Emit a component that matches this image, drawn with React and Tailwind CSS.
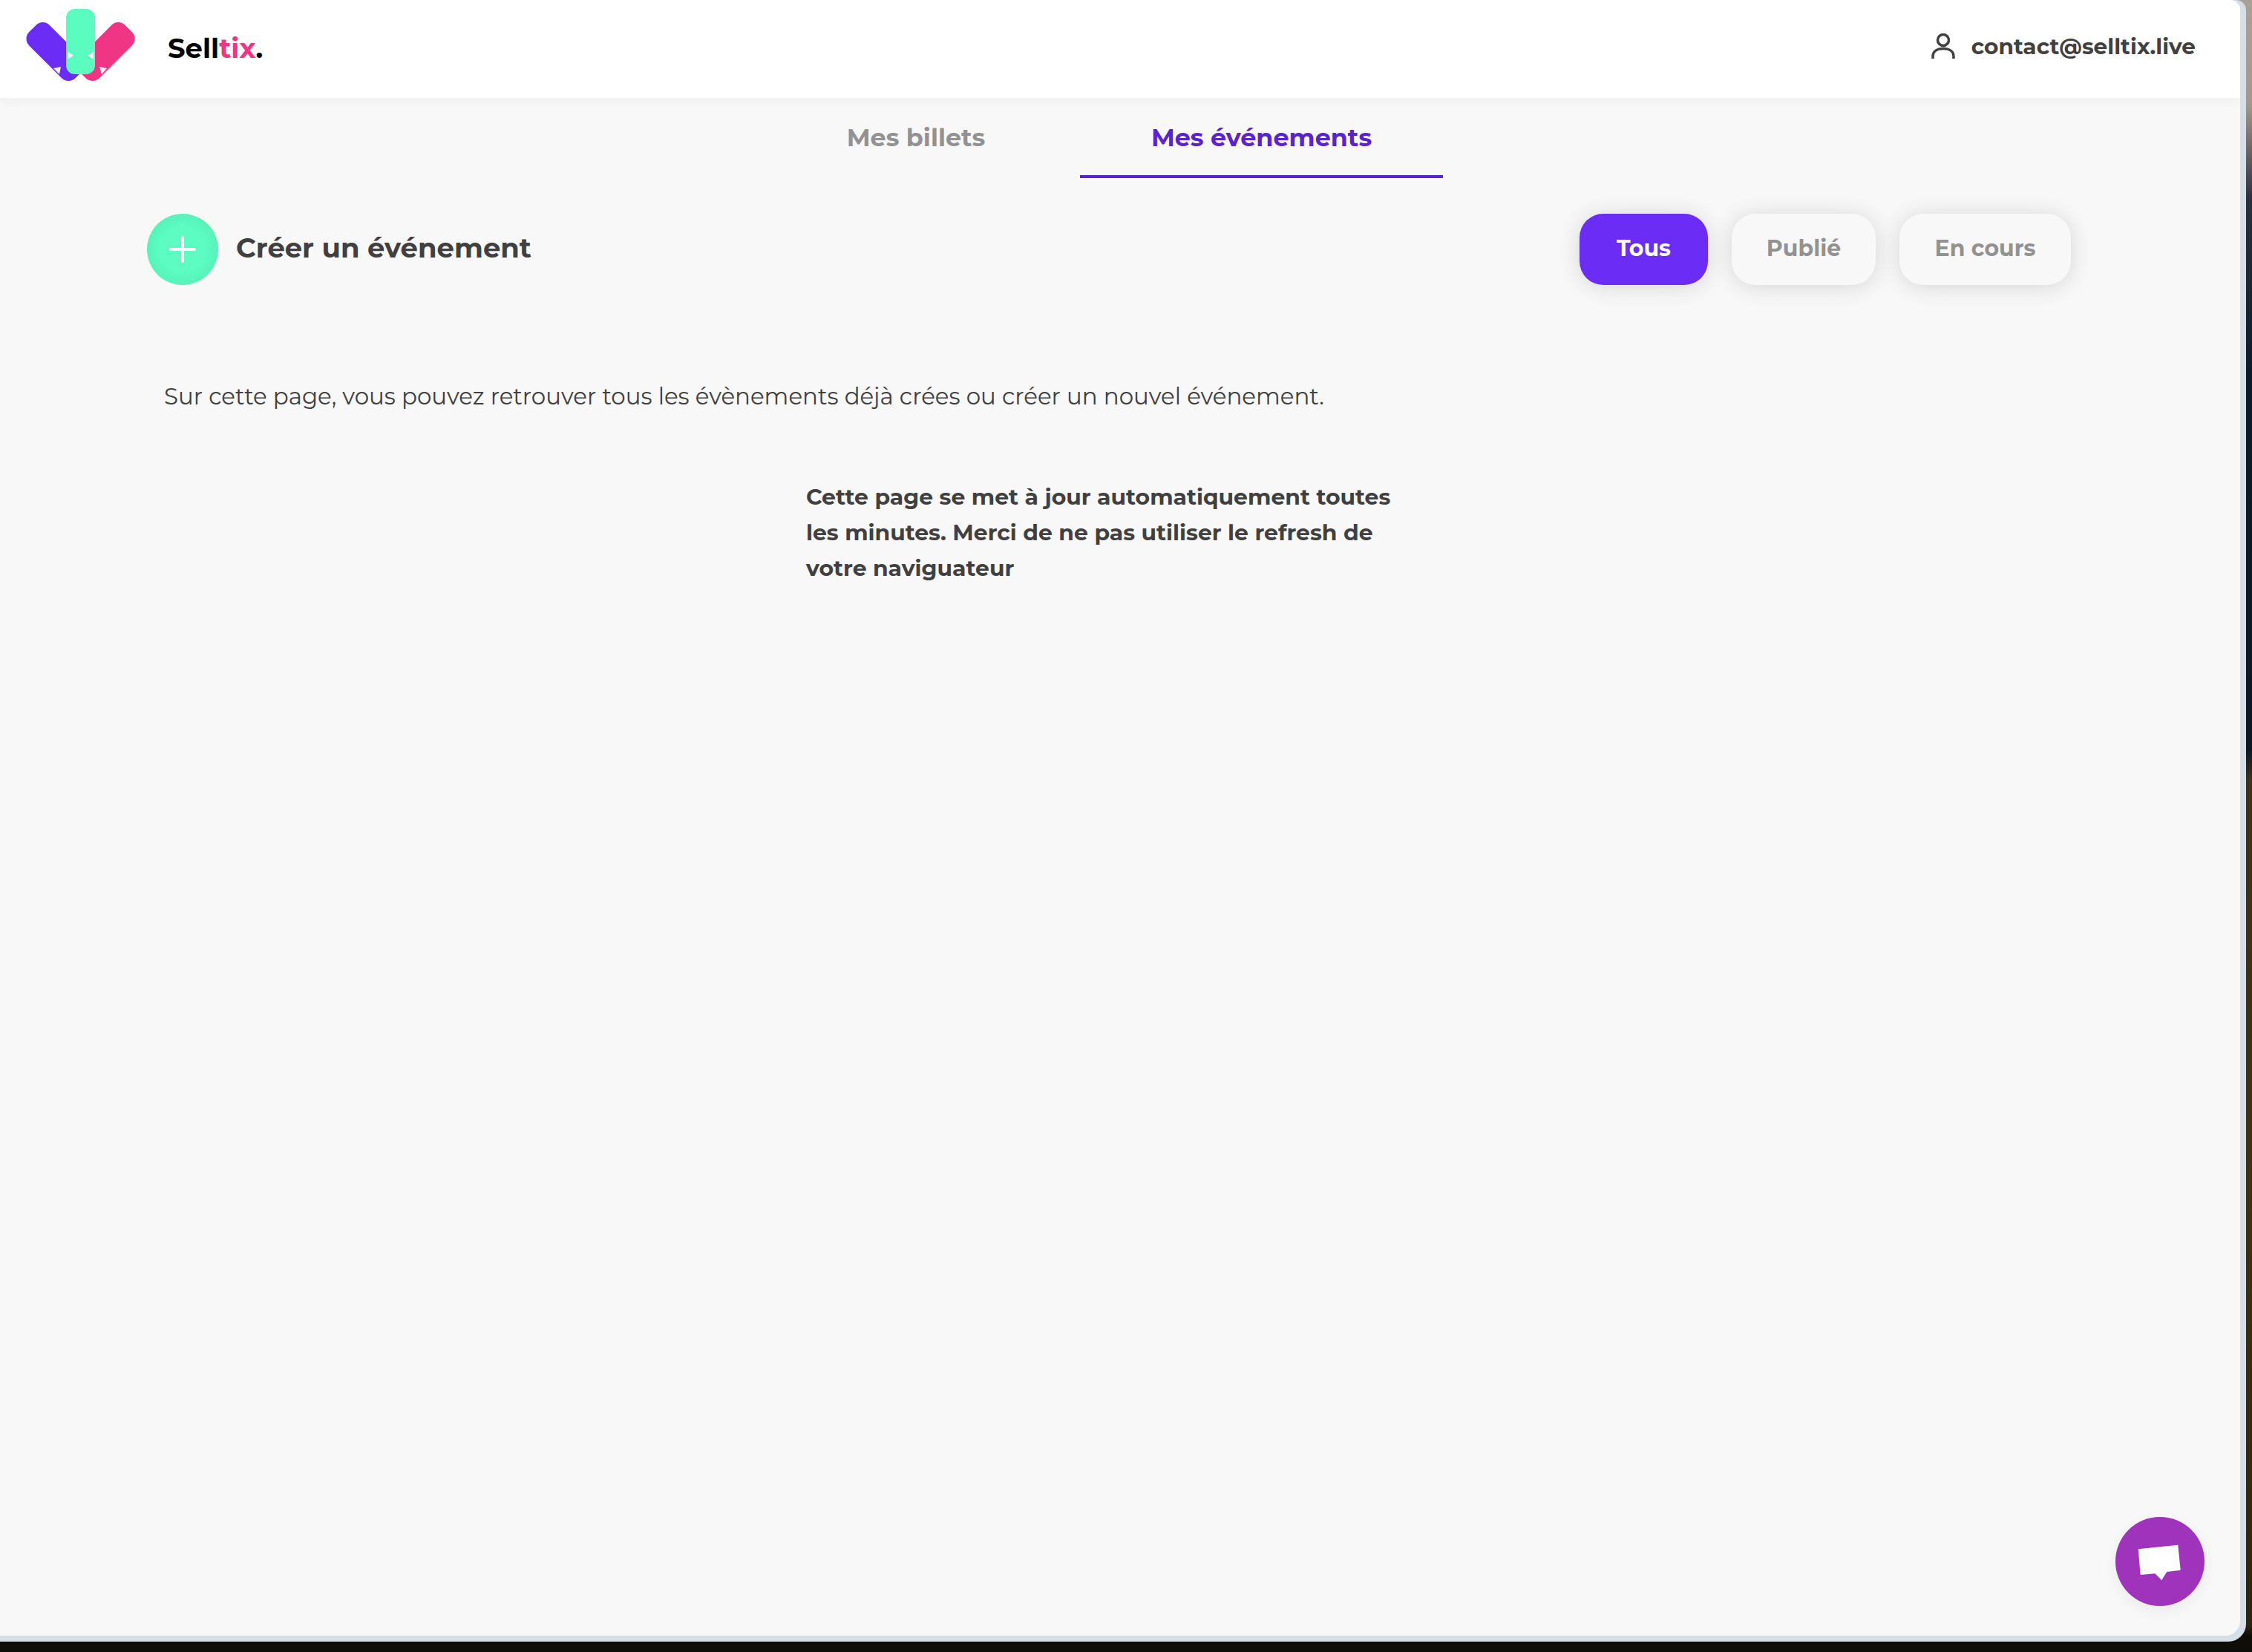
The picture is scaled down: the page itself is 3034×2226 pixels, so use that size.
const font = { fontFamily: '"Montserrat", Inter, "Noto Sans", sans-serif' };

function Logo() {
  return (
    <svg width="200" height="132" viewBox="0 0 200 132" className="shrink-0">
      <rect x="55.5" y="25.6" width="39" height="88" rx="13" fill="#6b2df5" transform="rotate(-45 75 69.6)" />
      <rect x="122.5" y="25.6" width="39" height="88" rx="13" fill="#f03584" transform="rotate(45 142 69.6)" />
      <rect x="89" y="12" width="39" height="88" rx="12" fill="#5afcc0" />
      <polygon points="91,69 99,75 91,80" fill="#f4f4f8" />
      <polygon points="126,69 118,75 126,80" fill="#f4f4f8" />
      <polygon points="72,92 82,90 80,100" fill="#f4f4f8" />
      <polygon points="134,90 144,92 137,100" fill="#f4f4f8" />
    </svg>
  );
}

function Pill({ children, className }) {
  return (
    <div className={"h-24 flex items-center justify-center pb-[3px] rounded-[32px] text-[30px] font-bold shadow-[0_2px_30px_rgba(0,0,0,0.14)] " + className}>
      {children}
    </div>
  );
}

export default function App() {
  return (
    <div
      style={font}
      className="w-[3034px] h-[2226px] overflow-hidden flex items-start bg-[linear-gradient(to_bottom,#a8a296_0,#a09a8e_140px,#2c2e3c_270px,#0e1a28_500px,#0e1622_1010px,#39331f_1050px,#3d3018_1600px,#2a2512_2190px,#0e0d07_2205px)]"
    >
      <div className="relative w-[3026px] h-[2212px] bg-[#d5dfe8] pr-2 pb-2 rounded-tr-[14px] rounded-br-[24px]">
        <div className="h-full bg-[#f8f8f8] rounded-tr-[14px] rounded-br-[20px] overflow-hidden flex flex-col">
          <header className="h-[132px] shrink-0 bg-white shadow-[0_2px_16px_rgba(0,0,0,0.05)] flex items-center justify-between pr-[60px] relative">
            <div className="flex items-center">
              <Logo />
              <span className="text-[37px] font-bold text-black ml-[26px] -translate-y-[1px]">
                Sell<span className="text-[#f03584]">tix</span>.
              </span>
            </div>
            <div className="flex items-center gap-[22px] text-[29.6px] font-bold text-[#404040] -translate-y-[4px]">
              <svg width="32" height="34" viewBox="0 0 32 34" fill="none" stroke="#404040" strokeWidth="3.5">
                <circle cx="16" cy="9" r="7.5" />
                <path d="M2 34 V31 C2 24 8 20.5 16 20.5 C24 20.5 30 24 30 31 V34" />
              </svg>
              <span>contact@selltix.live</span>
            </div>
          </header>

          <nav className="flex ml-[1013px] h-[108px] shrink-0 text-[33.4px] font-bold">
            <div className="w-[442px] flex justify-center pt-[28px] text-[#929292]">Mes billets</div>
            <div className="w-[489px] flex justify-center pt-[28px] text-[#5a22d0] border-b-4 border-[#5a22d0]">Mes événements</div>
          </nav>

          <div className="flex items-center justify-between pl-[198px] pr-[228px] mt-[48px]">
            <div className="flex items-center gap-6">
              <div className="w-24 h-24 rounded-full bg-[radial-gradient(circle,#5cfcc2_45%,#50e8b2_100%)] flex items-center justify-center">
                <svg width="36" height="36" viewBox="0 0 36 36" stroke="white" strokeWidth="4" strokeLinecap="round">
                  <path d="M18 2 V34 M2 18 H34" />
                </svg>
              </div>
              <span className="text-[37px] font-bold text-[#404040] pb-[4px]">Créer un événement</span>
            </div>
            <div className="flex gap-8">
              <Pill className="w-[173px] bg-[#6b2df5] text-white">Tous</Pill>
              <Pill className="w-[194px] bg-[#f8f8f8] text-[#929292]">Publié</Pill>
              <Pill className="w-[231px] bg-[#f8f8f8] text-[#929292]">En cours</Pill>
            </div>
          </div>

          <p className="ml-[221px] mt-[128px] text-[30.9px] leading-[44px] text-[#404040]">
            Sur cette page, vous pouvez retrouver tous les évènements déjà crées ou créer un nouvel événement.
          </p>

          <p className="ml-[1086px] w-[830px] mt-[90px] text-[29.9px] leading-[48px] font-bold text-[#404040]">
            Cette page se met à jour automatiquement toutes les minutes. Merci de ne pas utiliser le refresh de votre naviguateur
          </p>
        </div>

        <div className="absolute left-[2850px] top-[2044px] w-[120px] h-[120px] rounded-full bg-[#a033bc] shadow-[0_6px_20px_rgba(0,0,0,0.06)]">
          <svg width="120" height="120" viewBox="0 0 120 120">
            <polygon points="30.7,43.3 84.3,37.7 87.7,71.7 69.3,74 62.3,85.3 53.3,76.3 33.7,78" fill="white" />
          </svg>
        </div>
      </div>
    </div>
  );
}
